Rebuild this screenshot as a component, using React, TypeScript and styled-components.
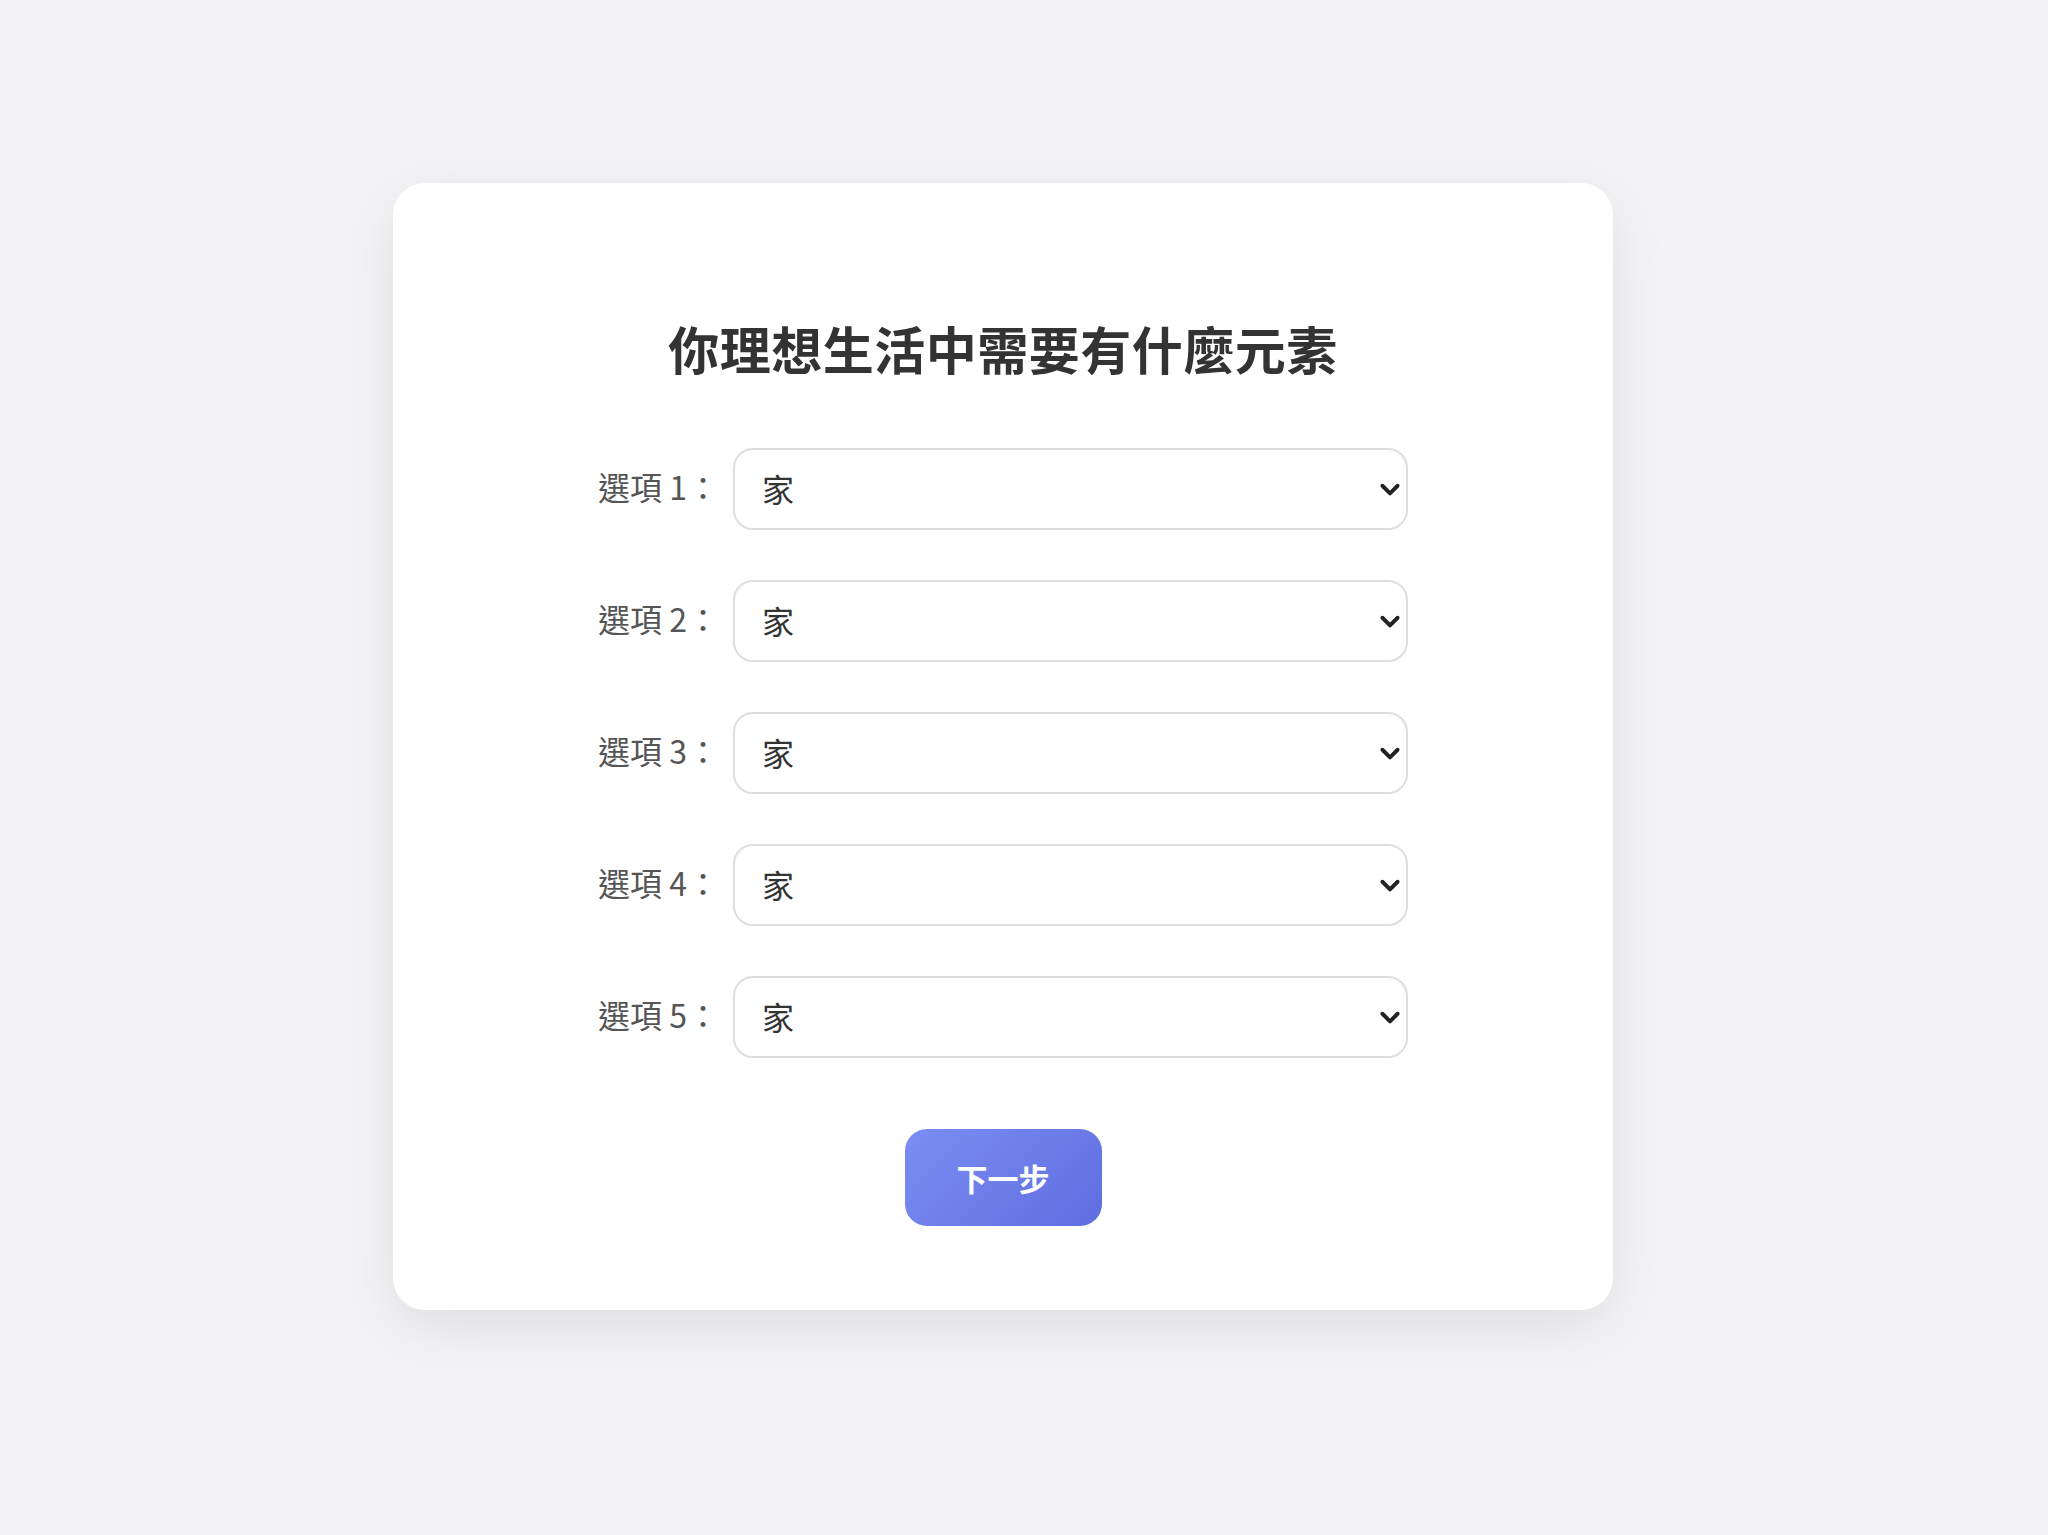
import React from 'react';
import styled, { createGlobalStyle } from 'styled-components';

const GlobalStyle = createGlobalStyle`
    html, body {
        margin: 0;
        padding: 0;
        background: #f4f4f6;
    }
    body {
        font-family: 'Noto Sans CJK TC', 'Noto Sans', sans-serif;
    }
`;

const Page = styled.div`
    min-height: 100vh;
    box-sizing: border-box;
    display: flex;
    justify-content: center;
    align-items: flex-start;
    padding: 183px 42px 0 0;
    background: #f4f4f6;
`;

const Card = styled.div`
    width: 1220px;
    box-sizing: border-box;
    background: #fff;
    border-radius: 32px;
    box-shadow: 0 18px 60px rgba(0, 0, 0, 0.09);
    padding: 133px 0 84px;
    display: flex;
    flex-direction: column;
    align-items: center;
`;

const Title = styled.h2`
    margin: 0 0 67px;
    font-size: 51px;
    line-height: 65px;
    font-weight: 700;
    letter-spacing: 0.5px;
    color: #333;
    font-family: 'Noto Sans CJK TC', sans-serif;
`;

const Form = styled.div`
    display: flex;
    flex-direction: column;
    gap: 50px;
`;

const Row = styled.div`
    display: flex;
    align-items: center;
`;

const Label = styled.label`
    font-size: 32px;
    line-height: 1.2;
    color: #555;
    margin-right: 14px;
    padding-bottom: 5px;
    white-space: pre;
    font-family: 'Noto Sans CJK TC', sans-serif;
`;

const SelectWrap = styled.div`
    position: relative;
    width: 675px;
    height: 82px;
`;

const Select = styled.select`
    appearance: none;
    width: 100%;
    height: 100%;
    box-sizing: border-box;
    border: 2px solid #dedede;
    border-radius: 20px;
    background: #fff;
    padding: 0 40px 3px 27px;
    font-size: 32px;
    color: #333;
    font-family: 'Noto Sans CJK TC', sans-serif;
    outline: none;
`;

const Chevron = styled.svg`
    position: absolute;
    right: 5px;
    top: 50%;
    transform: translateY(-50%);
    pointer-events: none;
`;

const Button = styled.button`
    margin-top: 71px;
    height: 97px;
    padding: 0 52px;
    border: none;
    border-radius: 22px;
    background: linear-gradient(135deg, #7b8ef4 0%, #5f6ddf 100%);
    color: #fff;
    font-size: 31px;
    font-weight: 700;
    font-family: 'Noto Sans CJK TC', sans-serif;
    cursor: pointer;
`;

const options = ['家', '工作', '朋友', '健康', '自由'];

const App = () => {
    return (
        <>
            <GlobalStyle />
            <Page>
                <Card>
                    <Title>你理想生活中需要有什麼元素</Title>
                    <Form>
                        {[1, 2, 3, 4, 5].map((n) => (
                            <Row key={n}>
                                <Label>{`選項 ${n}：`}</Label>
                                <SelectWrap>
                                    <Select defaultValue="家">
                                        {options.map((o) => (
                                            <option key={o} value={o}>{o}</option>
                                        ))}
                                    </Select>
                                    <Chevron width="26" height="26" viewBox="0 0 24 24">
                                        <polyline
                                            points="5,9 12,16 19,9"
                                            fill="none"
                                            stroke="#222"
                                            strokeWidth="3.6"
                                            strokeLinecap="round"
                                            strokeLinejoin="round"
                                        />
                                    </Chevron>
                                </SelectWrap>
                            </Row>
                        ))}
                    </Form>
                    <Button>下一步</Button>
                </Card>
            </Page>
        </>
    );
};

export default App;
